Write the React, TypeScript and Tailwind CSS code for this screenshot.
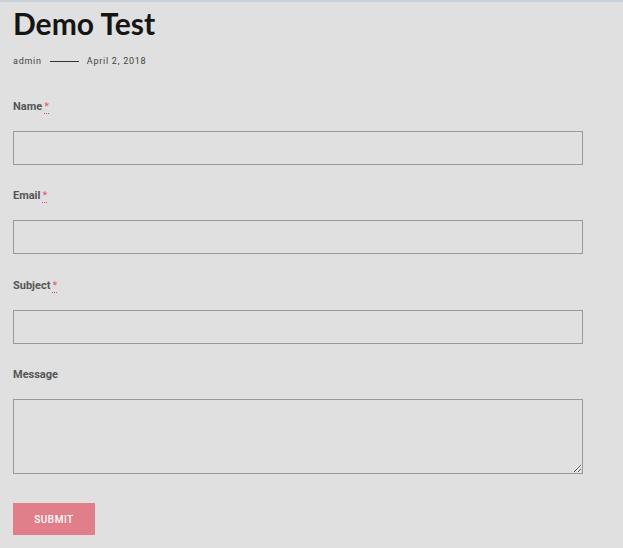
import React from "react";

const Field = ({ label, required, gap }: { label: string; required?: boolean; gap: string }) => (
  <div className={gap}>
    <div className="h-[16px] text-[11px] leading-[16px] font-bold text-[#555]">
      {label}
      {required && (
        <abbr className="ml-[2px] text-[#e85a66] no-underline border-b border-dotted border-[#e0505a] font-normal" title="required">*</abbr>
      )}
    </div>
    <input className="mt-[16px] block w-[570px] h-[34px] border border-[#9a9a9a] bg-transparent outline-none" />
  </div>
);

export default function App() {
  return (
    <div className="w-[623px] h-[548px] bg-[#e0e0e0] border-t-2 border-[#c9d2dc] overflow-hidden font-['Roboto',sans-serif]">
      <div className="pl-[13px]">
        <h1 className="text-[30px] leading-[44px] font-bold text-[#151515] font-['Lato',sans-serif] -mt-[1px]">Demo Test</h1>
        <div className="mt-[10px] flex items-center text-[9px] leading-[12px] tracking-[0.75px] text-[#444]">
          <span>admin</span>
          <span className="mx-[8px] w-[29px] h-px bg-[#333]" />
          <span>April 2, 2018</span>
        </div>
        <div>
          <Field label="Name" required gap="mt-[32px]" />
          <Field label="Email" required gap="mt-[23px]" />
          <Field label="Subject" required gap="mt-[24px]" />
          <div className="mt-[23px]">
            <div className="h-[16px] text-[11px] leading-[16px] font-bold text-[#555]">Message</div>
            <textarea className="mt-[16px] block w-[570px] h-[75px] border border-[#9a9a9a] bg-transparent outline-none resize-y" />
          </div>
          <button className="mt-[29px] w-[82px] h-[32px] bg-[#e07e8a] text-white text-[10px] font-medium tracking-[0.5px] uppercase">Submit</button>
        </div>
      </div>
    </div>
  );
}
